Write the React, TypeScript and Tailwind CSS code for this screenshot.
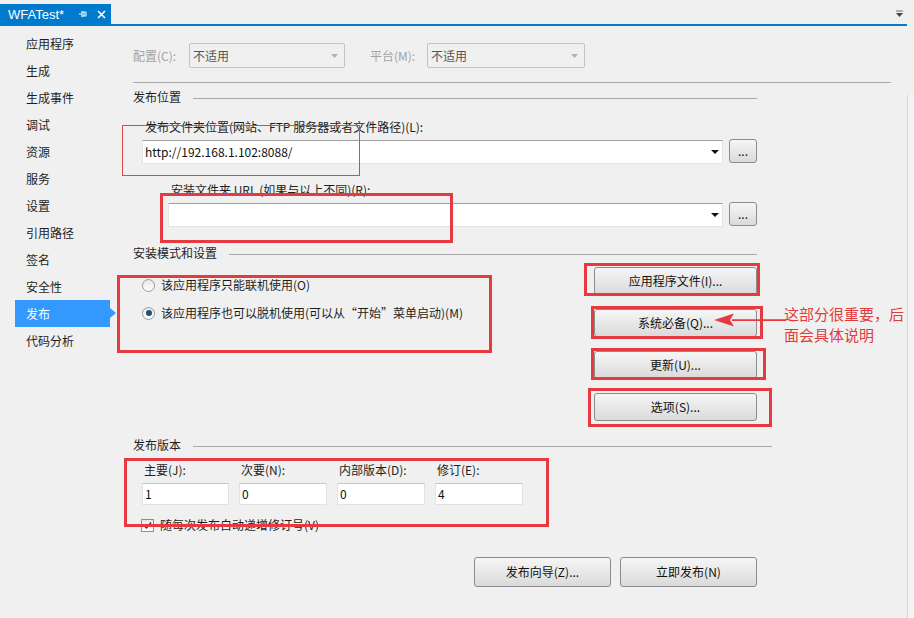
import React from "react";

const navItems = [
  "应用程序",
  "生成",
  "生成事件",
  "调试",
  "资源",
  "服务",
  "设置",
  "引用路径",
  "签名",
  "安全性",
  "发布",
  "代码分析",
];

// grey Windows-style push button
const Btn = ({ label, className }: { label: string; className: string }) => (
  <div
    className={`flex items-center justify-center rounded-[3px] border border-[#8c8c8c] bg-gradient-to-b from-[#f6f6f6] to-[#dadada] text-[12px] leading-none text-[#111] ${className}`}
  >
    {label}
  </div>
);

const Combo = ({ value, className }: { value?: string; className: string }) => (
  <div
    className={`flex h-[24px] items-center border border-[#e4e4e4] border-t-[#a0a0a0] bg-white pl-[2px] pr-[3px] text-[12px] text-[#111] ${className}`}
  >
    <span className="flex-1">{value}</span>
    <svg width="8" height="4" viewBox="0 0 8 4">
      <path d="M0 0h8L4 4z" fill="#111" />
    </svg>
  </div>
);

const Heading = ({ title, className }: { title: string; className: string }) => (
  <div className={`flex h-[16px] items-center text-[12px] leading-none text-[#1e1e1e] ${className}`}>
    <span className="-mt-[2px]">{title}</span>
    <div className="ml-[12px] h-px flex-1 bg-[#a8a8a8]" />
  </div>
);

const Radio = ({ checked, label }: { checked?: boolean; label: string }) => (
  <div className="flex h-[16px] items-center text-[12px] leading-none text-[#1e1e1e]">
    <div className="ml-[9px] flex h-[13px] w-[13px] items-center justify-center rounded-full border border-[#9a9a9a] bg-gradient-to-b from-[#e8e8e8] to-[#ffffff]">
      {checked && <div className="h-[6px] w-[6px] rounded-full bg-[#1f4f7a]" />}
    </div>
    <span className="-mt-[1px] ml-[6px]">{label}</span>
  </div>
);

const VersionField = ({ label, value, width }: { label: string; value: string; width: string }) => (
  <div className={`flex flex-col ${width}`}>
    <span className="h-[16px] pl-[2px] text-[12px] leading-[14px] text-[#1e1e1e]">{label}</span>
    <div className="mt-[4px] flex h-[22px] items-center border border-[#e2e2e2] border-t-[#c8c8c8] bg-white pl-[2px] text-[12px] text-[#111]">
      {value}
    </div>
  </div>
);

export default function App() {
  return (
    <div className="relative h-[618px] w-[914px] overflow-hidden bg-[#f0f0f0] font-['Noto_Sans_CJK_SC',sans-serif]">
      {/* tab strip */}
      <div className="relative h-[26px]">
        <div className="absolute left-0 top-[4px] flex h-[20px] w-[111px] items-center bg-[#007acc] pl-[8px] text-[13px] leading-none text-white">
          <span className="font-['Liberation_Sans',sans-serif]">WFATest*</span>
          <svg className="ml-[14px]" width="10" height="10" viewBox="0 0 10 10">
            <path d="M1 5h3M4 2v6M4 3h4v4H4M6 3v4" stroke="white" strokeWidth="1" fill="none" />
          </svg>
          <svg className="ml-[9px]" width="9" height="9" viewBox="0 0 9 9">
            <path d="M1 1l7 7M8 1L1 8" stroke="white" strokeWidth="1.6" />
          </svg>
        </div>
        <svg className="absolute left-[895px] top-[10px]" width="9" height="8" viewBox="0 0 9 8">
          <path d="M1 1h7" stroke="#6d6d6d" strokeWidth="1" />
          <path d="M1 3h7L4.5 7z" fill="#444" />
        </svg>
        <div className="absolute left-0 top-[24px] h-[2px] w-[907px] bg-[#007acc]" />
      </div>

      <div className="flex">
        {/* side navigation */}
        <div className="w-[133px] pt-[4px]">
          {navItems.map((item) =>
            item === "发布" ? (
              <div key={item} className="relative ml-[15px] flex h-[27px] w-[95px] items-center bg-[#3399ff] pl-[11px] text-[12px] text-white">
                {item}
                <div className="absolute left-[95px] top-[8px] h-0 w-0 border-y-[5px] border-l-[6px] border-y-transparent border-l-[#3399ff]" />
              </div>
            ) : (
              <div key={item} className="flex h-[27px] items-center pl-[26px] text-[12px] text-[#1e1e1e]">
                {item}
              </div>
            )
          )}
        </div>

        {/* main panel */}
        <div className="flex w-[758px] flex-col">
          <div className="mt-[17px] flex h-[25px] items-center text-[12px]">
            <span className="w-[56px] text-[#a3a3a3]">配置(C):</span>
            <div className="flex h-[25px] w-[156px] items-center rounded-[2px] border border-[#c3c3c3] pl-[3px] pr-[6px] text-[#555]">
              <span className="flex-1">不适用</span>
              <svg width="7" height="4" viewBox="0 0 7 4"><path d="M0 0h7L3.5 4z" fill="#b0b0b0" /></svg>
            </div>
            <span className="ml-[25px] w-[57px] text-[#a3a3a3]">平台(M):</span>
            <div className="flex h-[25px] w-[158px] items-center rounded-[2px] border border-[#c3c3c3] pl-[3px] pr-[6px] text-[#555]">
              <span className="flex-1">不适用</span>
              <svg width="7" height="4" viewBox="0 0 7 4"><path d="M0 0h7L3.5 4z" fill="#b0b0b0" /></svg>
            </div>
          </div>
          <div className="mt-[14px] h-px w-[758px] bg-[#a8a8a8]" />

          <Heading title="发布位置" className="mt-[7px] w-[624px]" />
          <div className="mt-[13px] h-[17px] pl-[12px] text-[12px] leading-[16px] text-[#1e1e1e]">
            发布文件夹位置(网站、FTP 服务器或者文件路径)(L):
          </div>
          <div className="mt-[3px] flex items-start">
            <Combo value="http://192.168.1.102:8088/" className="ml-[9px] mt-[1px] w-[581px]" />
            <Btn label="..." className="ml-[6px] h-[24px] w-[28px]" />
          </div>
          <div className="mt-[18px] h-[17px] pl-[38px] text-[12px] leading-[16px] text-[#1e1e1e]">
            安装文件夹 URL (如果与以上不同)(R):
          </div>
          <div className="mt-[3px] flex items-start">
            <Combo className="ml-[35px] mt-[1px] w-[555px]" />
            <Btn label="..." className="ml-[6px] h-[24px] w-[28px]" />
          </div>

          <Heading title="安装模式和设置" className="mt-[19px] w-[624px]" />
          <div className="flex h-[159px]">
            <div className="flex w-[461px] flex-col">
              <div className="mt-[15px]">
                <Radio label="该应用程序只能联机使用(O)" />
              </div>
              <div className="mt-[12px]">
                <Radio checked label="该应用程序也可以脱机使用(可以从“开始”菜单启动)(M)" />
              </div>
            </div>
            <div className="mt-[5px] flex flex-col gap-[14px]">
              <Btn label="应用程序文件(I)..." className="h-[28px] w-[163px]" />
              <Btn label="系统必备(Q)..." className="h-[28px] w-[163px]" />
              <Btn label="更新(U)..." className="h-[28px] w-[163px]" />
              <Btn label="选项(S)..." className="h-[28px] w-[163px]" />
            </div>
          </div>

          <Heading title="发布版本" className="mt-[17px] w-[639px]" />
          <div className="ml-[9px] mt-[9px] flex gap-[10px]">
            <VersionField label="主要(J):" value="1" width="w-[87px]" />
            <VersionField label="次要(N):" value="0" width="w-[88px]" />
            <VersionField label="内部版本(D):" value="0" width="w-[88px]" />
            <VersionField label="修订(E):" value="4" width="w-[88px]" />
          </div>
          <div className="ml-[8px] mt-[12px] flex h-[16px] items-center text-[12px] text-[#1e1e1e]">
            <div className="flex h-[13px] w-[13px] items-center justify-center border border-[#8e8e8e] bg-gradient-to-b from-[#e6e6e6] to-white">
              <svg width="9" height="9" viewBox="0 0 9 9">
                <path d="M1 4.5l2.5 2.5L8 1.5" stroke="#3a3a3a" strokeWidth="1.4" fill="none" />
              </svg>
            </div>
            <span className="-mt-[1px] ml-[6px]">随每次发布自动递增修订号(V)</span>
          </div>
          <div className="ml-[341px] mt-[24px] flex gap-[9px]">
            <Btn label="发布向导(Z)..." className="h-[30px] w-[137px]" />
            <Btn label="立即发布(N)" className="h-[30px] w-[137px]" />
          </div>
        </div>
      </div>

      {/* right scroll edge */}
      <div className="absolute left-[907px] top-[95px] h-[523px] w-[7px] border-l border-[#d4d4dc] bg-[#f4f4f6]" />

      {/* red annotation boxes */}
      <div className="absolute left-[122px] top-[125px] h-[51px] w-[238px] border-[1px] border-solid border-[#e0474c]" />
      <div className="absolute left-[160px] top-[193px] h-[50px] w-[293px] border-[3px] border-[#e53a40]" />
      <div className="absolute left-[117px] top-[275px] h-[78px] w-[375px] border-[3px] border-[#e53a40]" />
      <div className="absolute left-[584px] top-[263px] h-[33px] w-[176px] border-[3px] border-[#e53a40]" />
      <div className="absolute left-[591px] top-[306px] h-[33px] w-[172px] border-[3px] border-[#e53a40]" />
      <div className="absolute left-[591px] top-[348px] h-[32px] w-[175px] border-[3px] border-[#e53a40]" />
      <div className="absolute left-[588px] top-[388px] h-[39px] w-[184px] border-[3px] border-[#e53a40]" />
      <div className="absolute left-[124px] top-[458px] h-[69px] w-[425px] border-[3px] border-[#e53a40]" />

      <svg className="absolute left-[712px] top-[312px]" width="74" height="16" viewBox="0 0 74 16">
        <path d="M20 7.2H74v1.8H20z" fill="#e53a40" />
        <path d="M2 8L22 1.5l-4 6.5 4 6.5z" fill="#e53a40" />
      </svg>
      <div className="absolute left-[784px] top-[303px] whitespace-nowrap text-[15px] leading-[21px] text-[#e23b3b]">
        这部分很重要，后
        <br />
        面会具体说明
      </div>
    </div>
  );
}
